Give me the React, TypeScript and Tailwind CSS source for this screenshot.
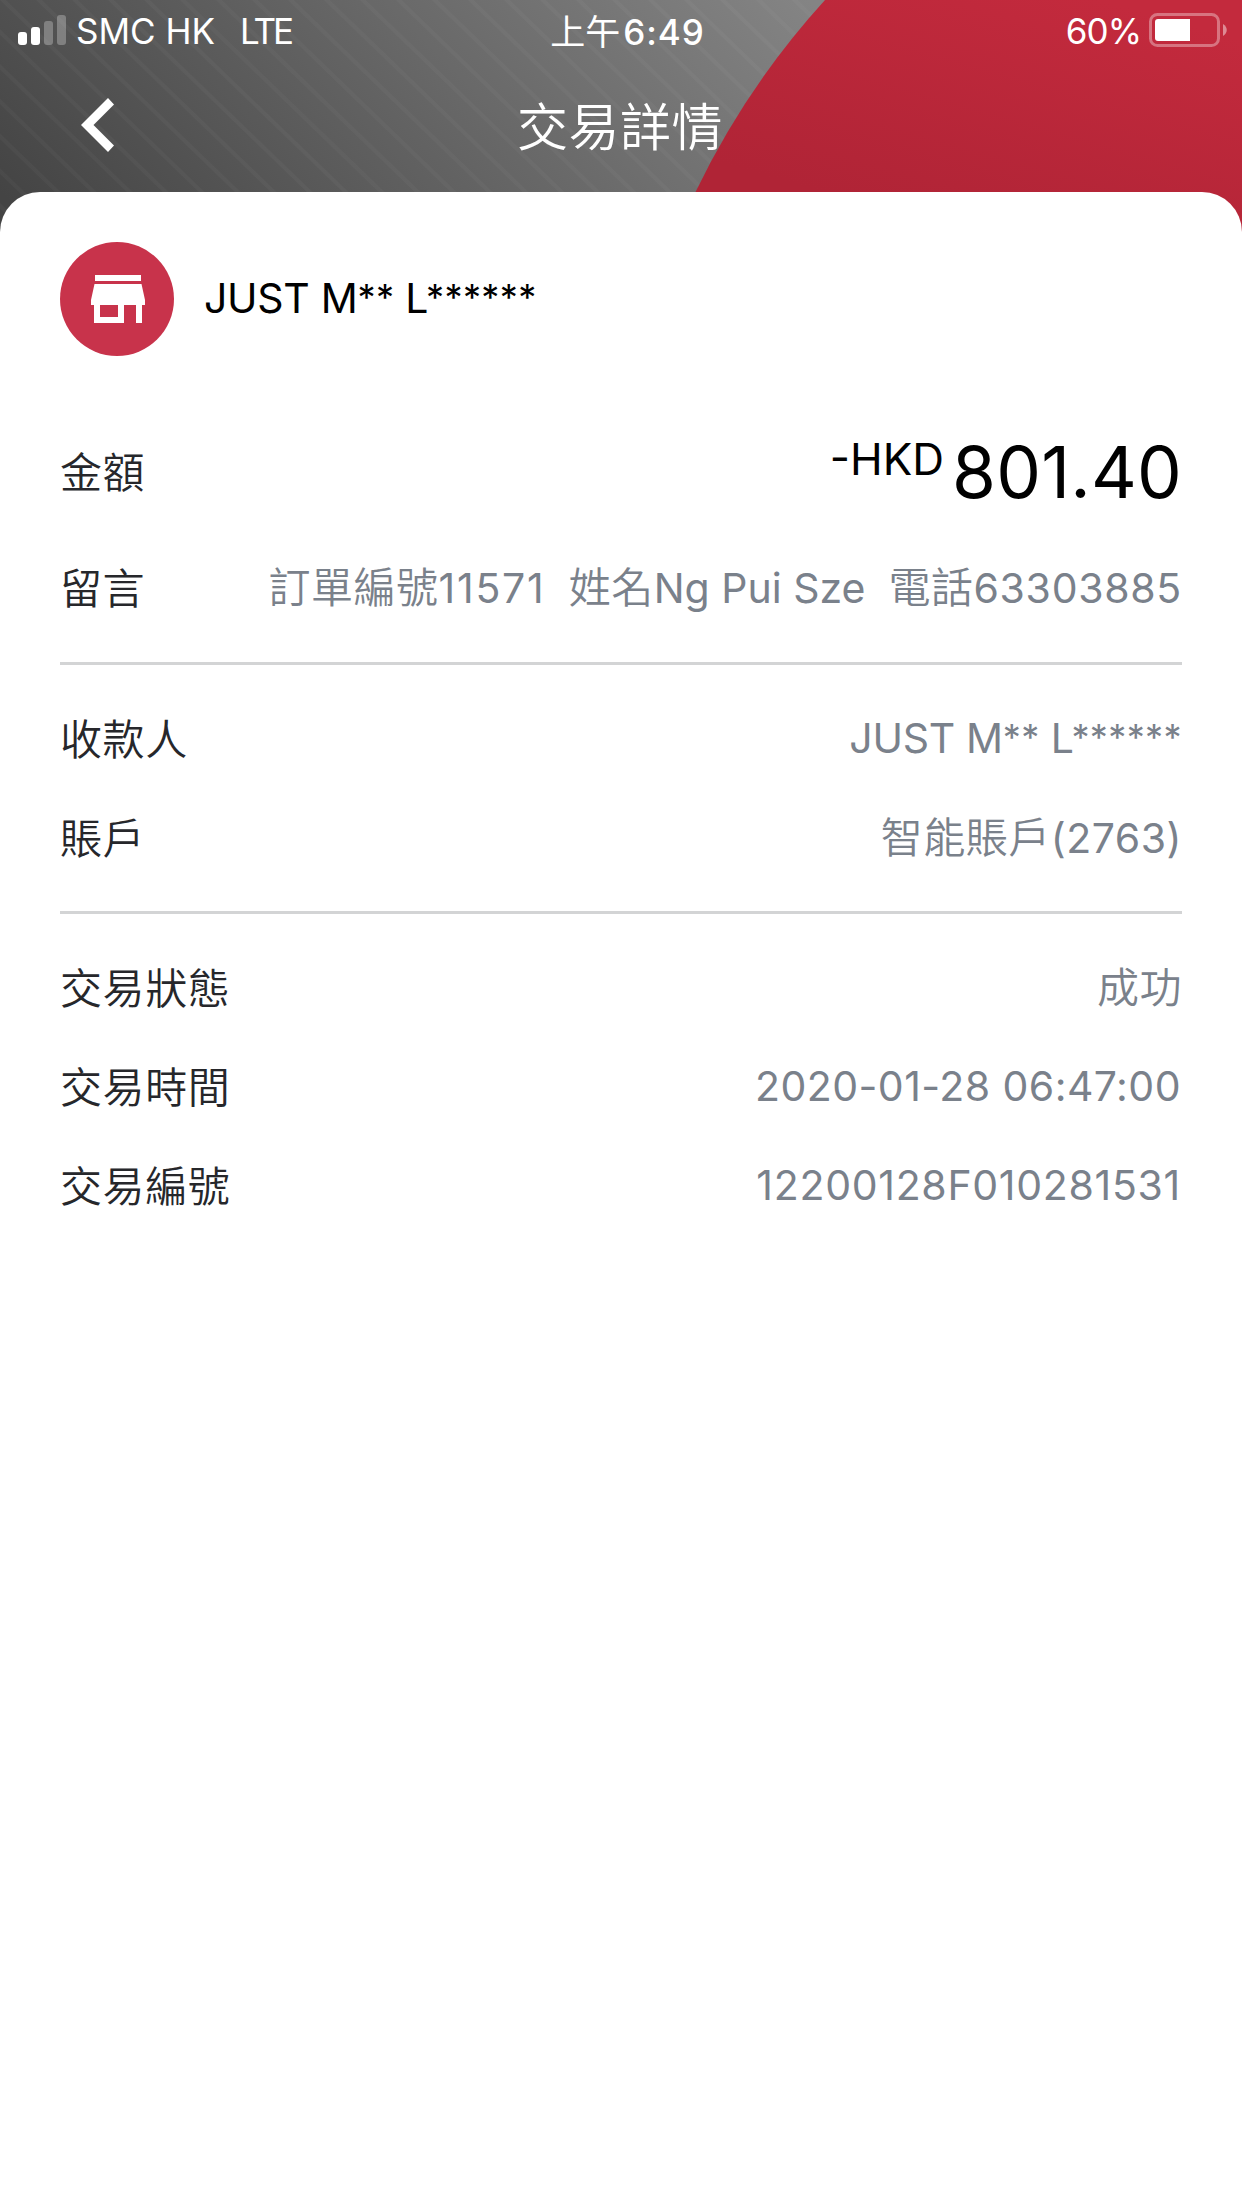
import type { ReactNode } from 'react'

function StatusBar() {
  return (
    <div className="flex h-[60px] items-center pt-px text-[35px] leading-[60px] text-white">
      <div className="flex flex-1 items-center pl-[18px]">
        <svg
          className="-mt-px"
          width="48"
          height="30"
          viewBox="0 0 48 30"
          fill="#fff"
        >
          <rect x="0" y="17" width="9" height="13" rx="3" />
          <rect x="13" y="12" width="9" height="18" rx="3" />
          <rect x="26" y="6" width="9" height="24" rx="3" opacity="0.27" />
          <rect x="39" y="0" width="9" height="30" rx="3" opacity="0.27" />
        </svg>
        <span className="ml-[10px]">SMC HK</span>
        <span className="ml-[25px] tracking-[-3px]">LTE</span>
      </div>

      <div className="pl-[10px]">
        <span className="font-['Noto_Sans_CJK_TC',sans-serif]">上午</span>
        <span className="ml-[3px] font-[550] tracking-[1px]">6:49</span>
      </div>

      <div className="flex flex-1 items-center justify-end pr-[15px]">
        <span className="mr-[8px] tracking-[-1px]">60%</span>
        <svg
          className="-mt-px"
          width="78"
          height="34"
          viewBox="0 0 78 34"
          fill="none"
        >
          <rect
            x="1.5"
            y="1.5"
            width="68"
            height="31"
            rx="7"
            stroke="#fff"
            strokeOpacity="0.35"
            strokeWidth="3"
          />
          <path d="M9 6h32v22H9a3 3 0 0 1-3-3V9a3 3 0 0 1 3-3Z" fill="#fff" />
          <path d="M74 11c5 3 5 9 0 12Z" fill="#fff" fillOpacity="0.45" />
        </svg>
      </div>
    </div>
  )
}

function HeaderBackground() {
  return (
    <svg
      className="absolute inset-0"
      width="1242"
      height="250"
      viewBox="0 0 1242 250"
    >
      <defs>
        <linearGradient
          id="gray"
          gradientUnits="userSpaceOnUse"
          x1="0"
          y1="192"
          x2="500"
          y2="-308"
        >
          <stop offset="0" stopColor="#444444" />
          <stop offset="1" stopColor="#848484" />
        </linearGradient>
        <linearGradient
          id="red"
          gradientUnits="userSpaceOnUse"
          x1="1100"
          y1="0"
          x2="1030"
          y2="250"
        >
          <stop offset="0" stopColor="#c32a3d" />
          <stop offset="1" stopColor="#b02436" />
        </linearGradient>
        <pattern
          id="stripes"
          width="25"
          height="25"
          patternUnits="userSpaceOnUse"
          patternTransform="rotate(-46)"
        >
          <rect width="4" height="25" fill="#fff" fillOpacity="0.028" />
        </pattern>
      </defs>
      <rect width="1242" height="250" fill="url(#gray)" />
      <rect width="1242" height="250" fill="url(#stripes)" />
      <path d="M825 0A800 800 0 0 0 695.5 192V250H1242V0Z" fill="url(#red)" />
    </svg>
  )
}

function StoreIcon() {
  return (
    <svg
      className="ml-0.5"
      width="54"
      height="48"
      viewBox="0 0 54 48"
      fill="#fff"
    >
      <path d="M4 0h46v6H4z" />
      <path
        fillRule="evenodd"
        d="M3.500 9h47L54 25v5h-3v18h-6V30H33v18H3V30H0v-5ZM9 30v12h18V30Z"
      />
    </svg>
  )
}

function Stars({ children }: { children: string }) {
  return (
    <span className="align-[3px] text-[36px] leading-none tracking-[0.4px]">
      {children}
    </span>
  )
}

interface MaskedNameProps {
  className?: string
}

function MaskedName({ className = 'tracking-[-0.3px]' }: MaskedNameProps) {
  return (
    <span className={className}>
      JUST M<Stars>**</Stars>
      <span className="ml-0.5 tracking-[-2.5px]">{' L'}</span>
      <Stars>******</Stars>
    </span>
  )
}

interface RowProps {
  label: string
  children: ReactNode
}

function Row({ label, children }: RowProps) {
  return (
    <div className="flex h-[99px] items-center justify-between">
      <span className="pt-px text-[42px] tracking-[0.6px] text-[#26272b]">
        {label}
      </span>
      <div className="whitespace-pre text-[41px] tracking-[0.5px] text-[#7a818b]">
        {children}
      </div>
    </div>
  )
}

function Cjk({ children }: { children: ReactNode }) {
  return <span className="text-[42px]">{children}</span>
}

export default function App() {
  return (
    <main className="relative flex h-[2208px] w-[1242px] flex-col overflow-hidden bg-white font-['Inter','Noto_Sans_CJK_TC_DemiLight','Noto_Sans_CJK_TC',sans-serif]">
      <HeaderBackground />

      <header className="relative flex h-[192px] flex-col">
        <StatusBar />
        <div className="flex flex-1 items-center">
          <div className="w-[517px] pl-[81px]">
            <svg
              className="-mt-0.5"
              width="34"
              height="54"
              viewBox="0 0 34 54"
              fill="#fff"
            >
              <path d="M27 0l6 6.500L12.500 27 33 47.500 27 54 0 27Z" />
            </svg>
          </div>
          <h1 className="pt-1 text-[51px] tracking-[0.5px] text-white">
            交易詳情
          </h1>
        </div>
      </header>

      <section className="relative flex-1 rounded-t-[40px] bg-white px-[60px] pt-[50px]">
        <div className="flex items-center">
          <div className="flex size-[114px] items-center justify-center rounded-full bg-[#c8334b]">
            <StoreIcon />
          </div>
          <MaskedName className="ml-[30px] text-[41px] tracking-[-0.3px] text-black" />
        </div>

        <div className="mt-[66px] flex flex-col border-b-[3px] border-[#d3d4d5] pb-[25px]">
          <div className="mb-4 flex h-[100px] items-center justify-between">
            <span className="pt-px text-[42px] tracking-[0.6px] text-[#26272b]">
              金額
            </span>
            <div className="flex items-start text-black">
              <span className="pt-px text-[44px] leading-[53px]">-HKD</span>
              <span className="ml-2 text-[71px] leading-[80px] tracking-[0.2px]">
                801.40
              </span>
            </div>
          </div>
          <Row label="留言">
            <Cjk>訂單編號</Cjk>
            <span className="tracking-[1.8px]">11571</span>
            <span className="tracking-normal">{'  '}</span>
            <Cjk>姓名</Cjk>
            <span className="tracking-normal">Ng Pui Sze</span>
            <span className="tracking-normal">{'  '}</span>
            <Cjk>電話</Cjk>
            <span className="tracking-[0.7px]">63303885</span>
          </Row>
        </div>

        <div className="flex flex-col border-b-[3px] border-[#d3d4d5] pb-6 pt-6">
          <Row label="收款人">
            <MaskedName />
          </Row>
          <Row label="賬戶">
            <Cjk>智能賬戶</Cjk>(2763)
          </Row>
        </div>

        <div className="flex flex-col pt-6">
          <Row label="交易狀態">
            <Cjk>成功</Cjk>
          </Row>
          <Row label="交易時間">
            <span className="pr-px tracking-[0.45px]">2020-01-28 06:47:00</span>
          </Row>
          <Row label="交易編號">
            <span className="pr-px tracking-[0.7px]">12200128F010281531</span>
          </Row>
        </div>
      </section>
    </main>
  )
}
